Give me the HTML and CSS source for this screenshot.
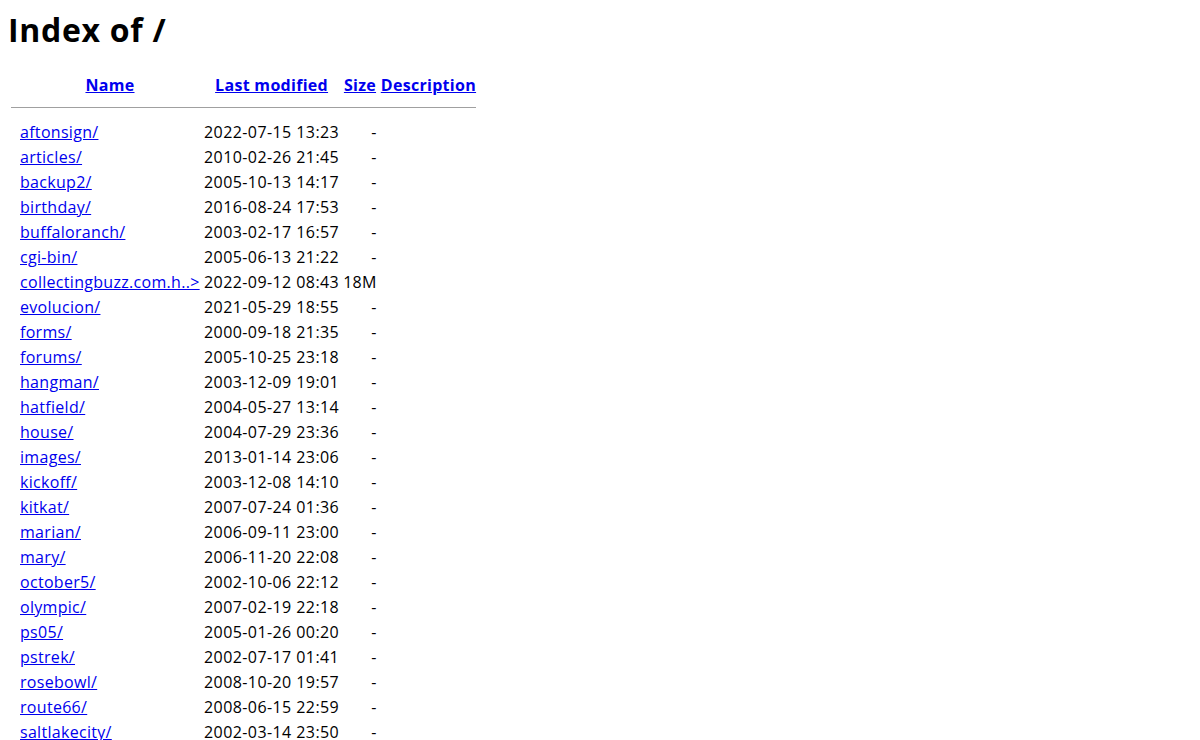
FILE: index.html
```html
<!DOCTYPE html>
<html>
<head>
	<meta charset="UTF-8">
	<title>Index of /</title>
	<link rel="stylesheet" href="styles.css">
</head>
<body>
<h1>Index of /</h1>
<table class="listing">
	<tr><th class="icon"></th><th class="name"><a href="?C=N;O=D">Name</a></th><th class="date"><a href="?C=M;O=A">Last modified</a></th><th class="size"><a href="?C=S;O=A">Size</a></th><th class="desc"><a href="?C=D;O=A">Description</a></th></tr>
	<tr><th colspan="5"><hr></th></tr>
	<tr><td class="icon"></td><td><a href="aftonsign/">aftonsign/</a></td><td class="r d">2022-07-15 13:23</td><td class="r">-</td><td></td></tr>
	<tr><td class="icon"></td><td><a href="articles/">articles/</a></td><td class="r d">2010-02-26 21:45</td><td class="r">-</td><td></td></tr>
	<tr><td class="icon"></td><td><a href="backup2/">backup2/</a></td><td class="r d">2005-10-13 14:17</td><td class="r">-</td><td></td></tr>
	<tr><td class="icon"></td><td><a href="birthday/">birthday/</a></td><td class="r d">2016-08-24 17:53</td><td class="r">-</td><td></td></tr>
	<tr><td class="icon"></td><td><a href="buffaloranch/">buffaloranch/</a></td><td class="r d">2003-02-17 16:57</td><td class="r">-</td><td></td></tr>
	<tr><td class="icon"></td><td><a href="cgi-bin/">cgi-bin/</a></td><td class="r d">2005-06-13 21:22</td><td class="r">-</td><td></td></tr>
	<tr><td class="icon"></td><td><a href="collectingbuzz.com.html">collectingbuzz.com.h..&gt;</a></td><td class="r d">2022-09-12 08:43</td><td class="r">18M</td><td></td></tr>
	<tr><td class="icon"></td><td><a href="evolucion/">evolucion/</a></td><td class="r d">2021-05-29 18:55</td><td class="r">-</td><td></td></tr>
	<tr><td class="icon"></td><td><a href="forms/">forms/</a></td><td class="r d">2000-09-18 21:35</td><td class="r">-</td><td></td></tr>
	<tr><td class="icon"></td><td><a href="forums/">forums/</a></td><td class="r d">2005-10-25 23:18</td><td class="r">-</td><td></td></tr>
	<tr><td class="icon"></td><td><a href="hangman/">hangman/</a></td><td class="r d">2003-12-09 19:01</td><td class="r">-</td><td></td></tr>
	<tr><td class="icon"></td><td><a href="hatfield/">hatfield/</a></td><td class="r d">2004-05-27 13:14</td><td class="r">-</td><td></td></tr>
	<tr><td class="icon"></td><td><a href="house/">house/</a></td><td class="r d">2004-07-29 23:36</td><td class="r">-</td><td></td></tr>
	<tr><td class="icon"></td><td><a href="images/">images/</a></td><td class="r d">2013-01-14 23:06</td><td class="r">-</td><td></td></tr>
	<tr><td class="icon"></td><td><a href="kickoff/">kickoff/</a></td><td class="r d">2003-12-08 14:10</td><td class="r">-</td><td></td></tr>
	<tr><td class="icon"></td><td><a href="kitkat/">kitkat/</a></td><td class="r d">2007-07-24 01:36</td><td class="r">-</td><td></td></tr>
	<tr><td class="icon"></td><td><a href="marian/">marian/</a></td><td class="r d">2006-09-11 23:00</td><td class="r">-</td><td></td></tr>
	<tr><td class="icon"></td><td><a href="mary/">mary/</a></td><td class="r d">2006-11-20 22:08</td><td class="r">-</td><td></td></tr>
	<tr><td class="icon"></td><td><a href="october5/">october5/</a></td><td class="r d">2002-10-06 22:12</td><td class="r">-</td><td></td></tr>
	<tr><td class="icon"></td><td><a href="olympic/">olympic/</a></td><td class="r d">2007-02-19 22:18</td><td class="r">-</td><td></td></tr>
	<tr><td class="icon"></td><td><a href="ps05/">ps05/</a></td><td class="r d">2005-01-26 00:20</td><td class="r">-</td><td></td></tr>
	<tr><td class="icon"></td><td><a href="pstrek/">pstrek/</a></td><td class="r d">2002-07-17 01:41</td><td class="r">-</td><td></td></tr>
	<tr><td class="icon"></td><td><a href="rosebowl/">rosebowl/</a></td><td class="r d">2008-10-20 19:57</td><td class="r">-</td><td></td></tr>
	<tr><td class="icon"></td><td><a href="route66/">route66/</a></td><td class="r d">2008-06-15 22:59</td><td class="r">-</td><td></td></tr>
	<tr><td class="icon"></td><td><a href="saltlakecity/">saltlakecity/</a></td><td class="r d">2002-03-14 23:50</td><td class="r">-</td><td></td></tr>
	<tr><th colspan="5"><hr></th></tr>
</table>
</body>
</html>
```

FILE: styles.css
```css
body{
	margin: 8px;
	font-family: "Open Sans", "Noto Sans", sans-serif;
	font-size: 16px;
	letter-spacing: 0.3px;
	color: #000;
	background: #fff;
}
h1{
	font-size: 32px;
	letter-spacing: 0.7px;
	margin: 0 0 20px;
	line-height: 44px;
}
a{color: #0000ee;}
.listing{
	border-spacing: 2px;
}
.listing th, .listing td{
	padding: 1px;
	line-height: 21px;
	white-space: nowrap;
}
.listing .icon{
	width: 5px;
}
.listing .name{width: 180px;}
.listing .date{width: 135px;}
.listing hr{
	margin: 7px 0 10px;
	border: 0;
	border-top: 1px solid #a0a0a0;
	height: 0;
}
.r{text-align: right;}
.d{letter-spacing: 0.42px;}
```
